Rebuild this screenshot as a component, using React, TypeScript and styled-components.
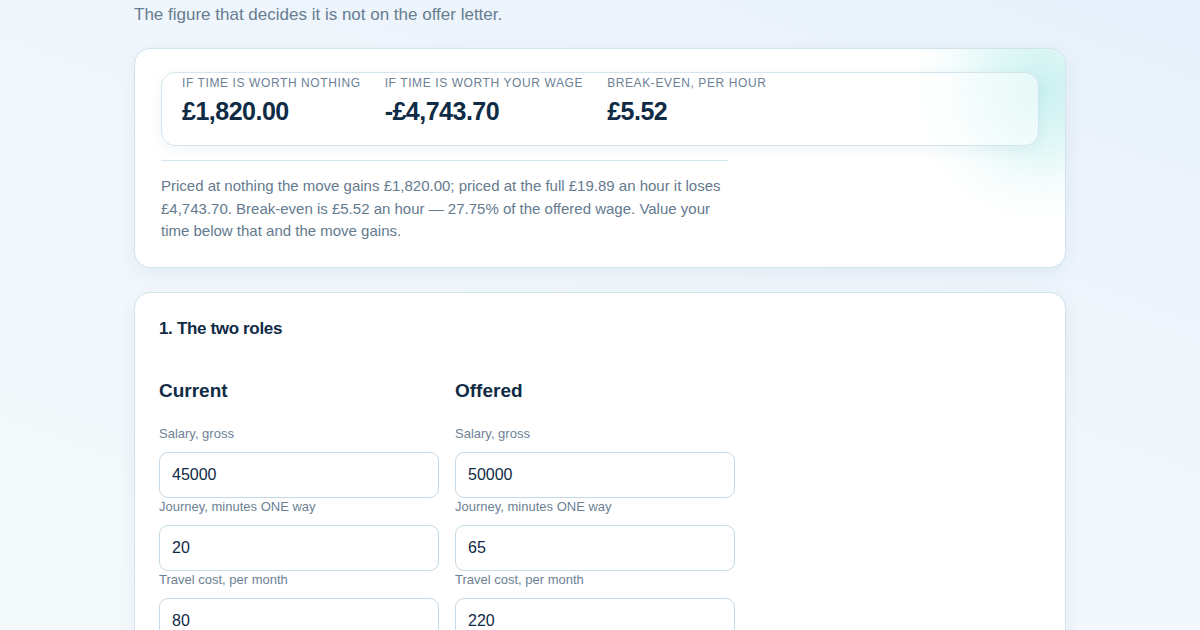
import styled, { createGlobalStyle } from 'styled-components';

const GlobalStyle = createGlobalStyle`
  html, body {
    margin: 0;
    padding: 0;
  }
  body {
    font-family: 'Liberation Sans', Arial, sans-serif;
    background: linear-gradient(200deg, #e7f0fb 0%, #f1f7fc 45%, #f4f9fb 100%);
    min-height: 630px;
    color: #0f2b45;
  }
`;

const Page = styled.main`
  width: 932px;
  margin: 0 auto;
  padding: 4px 0 40px;
  display: flex;
  flex-direction: column;
  gap: 24px;
`;

const Lede = styled.p`
  margin: 0 0 -2px;
  font-size: 17px;
  line-height: 22px;
  color: #677d91;
`;

const Card = styled.section`
  position: relative;
  overflow: hidden;
  background: #fff;
  border: 1px solid #d3e3ec;
  border-radius: 16px;
  box-shadow: 0 6px 18px rgba(40, 90, 130, 0.07);
  padding: 23px 26px 24px;
`;

const Glow = styled.div`
  position: absolute;
  top: -100px;
  right: -118px;
  width: 280px;
  height: 280px;
  border-radius: 50%;
  background: radial-gradient(
    circle,
    rgba(150, 228, 226, 0.5) 0%,
    rgba(165, 232, 230, 0.32) 30%,
    rgba(195, 240, 238, 0.14) 50%,
    rgba(255, 255, 255, 0) 68%
  );
  pointer-events: none;
`;

const StatBox = styled.div`
  position: relative;
  display: flex;
  gap: 24px;
  padding: 2px 20px 18px;
  border: 1px solid #d4e4ec;
  border-radius: 14px;
  background: rgba(255, 255, 255, 0.5);
  box-shadow: 0 4px 14px rgba(40, 90, 130, 0.06);
`;

const Stat = styled.div`
  display: flex;
  flex-direction: column;
`;

const StatLabel = styled.span`
  font-size: 12px;
  line-height: 16px;
  letter-spacing: 0.05em;
  text-transform: uppercase;
  color: #6c8195;
`;

const StatValue = styled.span`
  margin-top: 4px;
  font-size: 25px;
  line-height: 32px;
  font-weight: 700;
  letter-spacing: -0.02em;
  color: #0f2b45;
`;

const Summary = styled.div`
  position: relative;
  max-width: 567px;
  margin-top: 14px;
  padding-top: 14px;
  border-top: 1px solid #d6e6ee;
`;

const SummaryText = styled.p`
  margin: 0;
  font-size: 15px;
  line-height: 22.5px;
  color: #647a8e;
`;

const SectionCard = styled(Card)`
  padding: 24px 24px 20px;
`;

const SectionTitle = styled.h2`
  margin: 0;
  font-size: 17px;
  line-height: 24px;
  font-weight: 700;
  letter-spacing: -0.02em;
  color: #0f2b45;
`;

const Roles = styled.div`
  display: grid;
  grid-template-columns: 280px 280px;
  column-gap: 16px;
  margin-top: 38px;
`;

const Column = styled.div`
  display: flex;
  flex-direction: column;
`;

const ColumnTitle = styled.h3`
  margin: 0 0 22px;
  font-size: 19px;
  line-height: 24px;
  font-weight: 700;
  color: #0f2b45;
`;

const Field = styled.label`
  display: flex;
  flex-direction: column;
`;

const FieldLabel = styled.span`
  font-size: 13px;
  line-height: 18px;
  color: #6c8195;
  margin-bottom: 9px;
`;

const Input = styled.input`
  box-sizing: border-box;
  width: 100%;
  height: 46px;
  padding: 0 12px;
  font-family: inherit;
  font-size: 16px;
  color: #0f2b45;
  background: #fff;
  border: 1px solid #c5dae5;
  border-radius: 9px;
  outline: none;
`;

type Role = {
  title: string;
  salary: string;
  journey: string;
  travel: string;
};

const roles: Role[] = [
  { title: 'Current', salary: '45000', journey: '20', travel: '80' },
  { title: 'Offered', salary: '50000', journey: '65', travel: '220' },
];

const stats = [
  { label: 'If time is worth nothing', value: '£1,820.00' },
  { label: 'If time is worth your wage', value: '-£4,743.70' },
  { label: 'Break-even, per hour', value: '£5.52' },
];

const App = () => (
  <>
    <GlobalStyle />
    <Page>
      <Lede>The figure that decides it is not on the offer letter.</Lede>
      <Card>
        <Glow />
        <StatBox>
          {stats.map((s) => (
            <Stat key={s.label}>
              <StatLabel>{s.label}</StatLabel>
              <StatValue>{s.value}</StatValue>
            </Stat>
          ))}
        </StatBox>
        <Summary>
          <SummaryText>
            Priced at nothing the move gains £1,820.00; priced at the full £19.89 an hour it loses
            £4,743.70. Break-even is £5.52 an hour — 27.75% of the offered wage. Value your time
            below that and the move gains.
          </SummaryText>
        </Summary>
      </Card>
      <SectionCard>
        <SectionTitle>1. The two roles</SectionTitle>
        <Roles>
          {roles.map((r) => (
            <Column key={r.title}>
              <ColumnTitle>{r.title}</ColumnTitle>
              <Field>
                <FieldLabel>Salary, gross</FieldLabel>
                <Input defaultValue={r.salary} />
              </Field>
              <Field>
                <FieldLabel>Journey, minutes ONE way</FieldLabel>
                <Input defaultValue={r.journey} />
              </Field>
              <Field>
                <FieldLabel>Travel cost, per month</FieldLabel>
                <Input defaultValue={r.travel} />
              </Field>
            </Column>
          ))}
        </Roles>
      </SectionCard>
    </Page>
  </>
);

export default App;
